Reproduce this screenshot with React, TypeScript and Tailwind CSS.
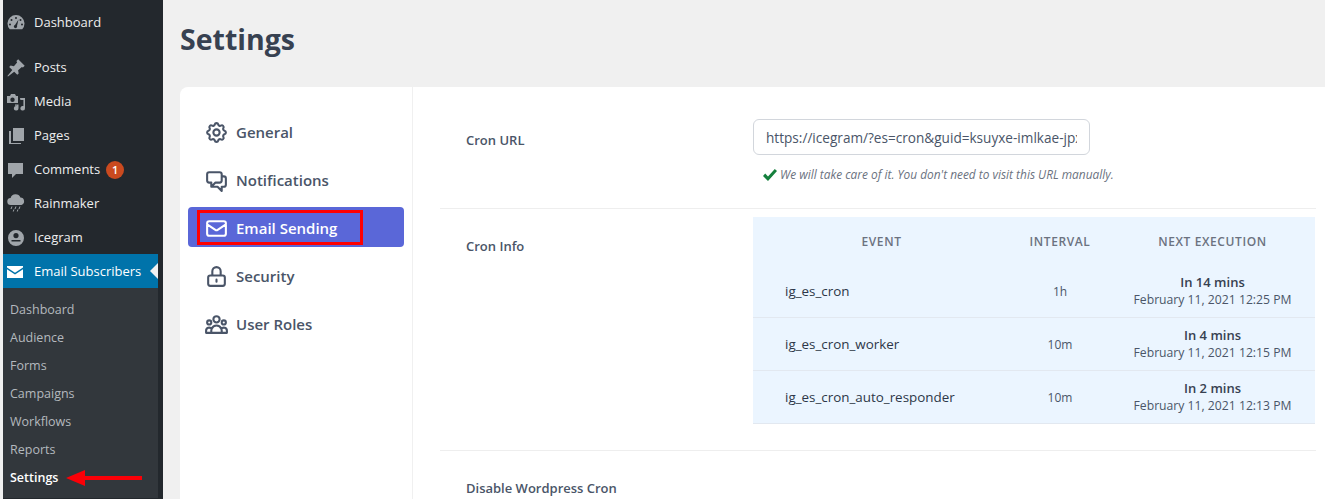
import React from "react";

const wpFont = { fontFamily: '"Open Sans", sans-serif' };

function Dash({ d }: { d: React.ReactNode }) {
  return (
    <svg width="20" height="20" viewBox="0 0 20 20" fill="#a0a5aa" className="shrink-0">
      {d}
    </svg>
  );
}

const icons: Record<string, React.ReactNode> = {
  Dashboard: (
    <path d="M3.76 16.24A8.5 8.5 0 1 1 16.24 16.24ZM10 4a1 1 0 1 0 0 2 1 1 0 0 0 0-2ZM5.5 6a1 1 0 1 0 0 2 1 1 0 0 0 0-2ZM14.5 6a1 1 0 1 0 0 2 1 1 0 0 0 0-2ZM4 10.5a1 1 0 1 0 0 2 1 1 0 0 0 0-2ZM16 10.5a1 1 0 1 0 0 2 1 1 0 0 0 0-2ZM12.5 6.5 9 12a1.6 1.6 0 1 0 2 1Z" fillRule="evenodd" />
  ),
  Posts: <path d="M10.44 3.02 12.2 1.3l6.5 6.5-1.76 1.76-1.1-.6-3.75 3.2.6 3.3-1.4 1.4-3.1-3.1L2 18.6l-.6-.6 4.9-5.9-3.1-3.1 1.4-1.4 3.3.6 3.2-3.75Z" />,
  Media: (
    <path d="M1 4h3l1-2h4l1 2h2v7H1Zm5.5 1.5a2.2 2.2 0 1 0 0 4.4 2.2 2.2 0 0 0 0-4.4ZM14 6h5v10.2a2.3 2.3 0 1 1-1.6-2.1V8h-3ZM9 12.5h3.5v3.7a2.3 2.3 0 1 1-1.6-2.1v-.4H9Z" fillRule="evenodd" />
  ),
  Pages: <path d="M7 2h11v13H7ZM5 5v12h10v1H3V5Z" />,
  Comments: <path d="M2 3h15v11h-7l-4 4v-4H2Z" />,
  Rainmaker: (
    <path d="M5 11a3.5 3.5 0 0 1-.4-7A5.2 5.2 0 0 1 14.4 3.6 3.8 3.8 0 0 1 15.5 11ZM5.5 12.5h1l-1 2.5h-1Zm4 0h1l-1 2.5h-1Zm4 0h1l-1 2.5h-1Zm-6 3h1l-.8 2h-1Zm4 0h1l-.8 2h-1Z" />
  ),
  Icegram: <path d="M10 2a8 8 0 1 0 0 16 8 8 0 0 0 0-16ZM10 5a2.6 2.6 0 1 1 0 5.2A2.6 2.6 0 0 1 10 5ZM5.5 12h9v1.6h-9Z" fillRule="evenodd" />,
};

function MenuItem({ label, badge }: { label: string; badge?: string }) {
  return (
    <div className="h-[34px] flex items-center pl-[3px] pt-[2px] text-[13px] text-[#eeeeee]">
      <span className="w-[28px] flex">
        <Dash d={icons[label]} />
      </span>
      <span>{label}</span>
      {badge && (
        <span className="ml-[6px] w-[18px] h-[18px] rounded-full bg-[#ca4a1f] text-white text-[11px] font-semibold flex items-center justify-center">
          {badge}
        </span>
      )}
    </div>
  );
}

function Side() {
  return (
    <aside className="w-[160px] h-[499px] shrink-0 ml-[3px] bg-[#23282d] overflow-hidden" style={wpFont}>
      <div className="pt-[5px]">
        <MenuItem label="Dashboard" />
      </div>
      <div className="pt-[11px]">
        <MenuItem label="Posts" />
        <MenuItem label="Media" />
        <MenuItem label="Pages" />
        <MenuItem label="Comments" badge="1" />
        <MenuItem label="Rainmaker" />
        <MenuItem label="Icegram" />
      </div>
      <div className="w-[155px]">
        <div className="relative h-[34px] bg-[#0073aa] flex items-center pl-[2px] pt-[2px] text-[13px] text-white">
          <span className="w-[29px] flex">
            <svg width="20" height="20" viewBox="0 0 20 20" fill="white">
              <path d="M2 4h16v1.4l-8 5.4-8-5.4ZM2 7.2l8 5.4 8-5.4V16H2Z" />
            </svg>
          </span>
          <span>Email Subscribers</span>
          <span className="absolute right-0 top-[9px] border-y-[8px] border-y-transparent border-r-[8px] border-r-[#f1f1f1]" />
        </div>
        <div className="bg-[#32373c] pt-[8px] pb-[6px] text-[12.5px] text-[#b4b9be]">
          {["Dashboard", "Audience", "Forms", "Campaigns", "Workflows", "Reports"].map((s) => (
            <div key={s} className="h-[28px] pl-[7px] flex items-center">
              {s}
            </div>
          ))}
          <div className="relative h-[28px] pl-[7px] flex items-center text-white font-semibold">
            Settings
            <svg className="absolute left-[60px] top-[5px]" width="82" height="18" viewBox="0 0 82 18">
              <path d="M3 9 22 1v6h57v4H22v6Z" fill="#fb0007" />
            </svg>
          </div>
        </div>
      </div>
    </aside>
  );
}

function HeroIcon({ d }: { d: string }) {
  return (
    <svg width="25" height="25" viewBox="0 0 24 24" fill="none" stroke="currentColor" strokeWidth="2" strokeLinecap="round" strokeLinejoin="round" className="shrink-0">
      <path d={d} />
    </svg>
  );
}

function NavItem({ d, label, active }: { d: string; label: string; active?: boolean }) {
  return (
    <div
      className={
        "relative h-[40px] mb-[8px] pt-[2px] rounded-[4px] flex items-center pl-[16px] gap-[7px] text-[15px] font-semibold " +
        (active ? "bg-[#5a67d8] text-white" : "text-[#4a5568]")
      }
    >
      <HeroIcon d={d} />
      <span>{label}</span>
      {active && <span className="absolute left-[9px] top-[3px] w-[166px] h-[35px] border-[3px] border-[#ff0000]" />}
    </div>
  );
}

function Row({ name, int, rel, date }: { name: string; int: string; rel: string; date: string }) {
  return (
    <div className="h-[53px] flex items-center border-b border-[#e2e8f0]">
      <div className="w-[253px] pl-[32px] text-[#2d3748] font-medium text-[13.4px]">{name}</div>
      <div className="w-[108px] pt-[1px] text-center text-[12px] text-[#4a5568]">{int}</div>
      <div className="flex-1 text-center pr-[4px]">
        <div className="text-[13px] leading-[17px] font-semibold text-[#374151]">{rel}</div>
        <div className="text-[12.2px] leading-[17px] text-[#4a5568]">{date}</div>
      </div>
    </div>
  );
}

export default function App() {
  const font = { fontFamily: '"Open Sans", sans-serif' };
  return (
    <div className="w-[1325px] h-[499px] flex bg-[#f0f0f0] overflow-hidden" style={font}>
      <Side />
      <main className="flex-1 min-w-0 pl-[17px]">
        <h1 className="h-[87px] pt-[20px] text-[28.5px] leading-[38px] font-bold text-[#374151]" style={font}>
          Settings
        </h1>
        <div className="w-[1145px] h-[412px] bg-white rounded-tl-[8px] flex">
          <nav className="w-[233px] shrink-0 pl-[8px] pr-[8px] pt-[24px] border-r border-[#f0f0f0]" style={font}>
            <NavItem label="General" d="M10.325 4.317c.426-1.756 2.924-1.756 3.35 0a1.724 1.724 0 002.573 1.066c1.543-.94 3.31.826 2.37 2.37a1.724 1.724 0 001.065 2.572c1.756.426 1.756 2.924 0 3.35a1.724 1.724 0 00-1.066 2.573c.94 1.543-.826 3.31-2.37 2.37a1.724 1.724 0 00-2.572 1.065c-.426 1.756-2.924 1.756-3.35 0a1.724 1.724 0 00-2.573-1.066c-1.543.94-3.31-.826-2.37-2.37a1.724 1.724 0 00-1.065-2.572c-1.756-.426-1.756-2.924 0-3.35a1.724 1.724 0 001.066-2.573c-.94-1.543.826-3.31 2.37-2.37.996.608 2.296.07 2.572-1.065zM15 12a3 3 0 11-6 0 3 3 0 016 0z" />
            <NavItem label="Notifications" d="M17 8h2a2 2 0 012 2v6a2 2 0 01-2 2h-2v4l-4-4H9a1.994 1.994 0 01-1.414-.586m0 0L11 14h4a2 2 0 002-2V6a2 2 0 00-2-2H5a2 2 0 00-2 2v6a2 2 0 002 2h2v4l.586-.586z" />
            <NavItem active label="Email Sending" d="M3 8l7.89 5.26a2 2 0 002.22 0L21 8M5 19h14a2 2 0 002-2V7a2 2 0 00-2-2H5a2 2 0 00-2 2v10a2 2 0 002 2z" />
            <NavItem label="Security" d="M12 15v2m-6 4h12a2 2 0 002-2v-6a2 2 0 00-2-2H6a2 2 0 00-2 2v6a2 2 0 002 2zm10-10V7a4 4 0 00-8 0v4h8z" />
            <NavItem label="User Roles" d="M17 20h5v-2a3 3 0 00-5.356-1.857M17 20H7m10 0v-2c0-.656-.126-1.283-.356-1.857M7 20H2v-2a3 3 0 015.356-1.857M7 20v-2c0-.656.126-1.283.356-1.857m0 0a5.002 5.002 0 019.288 0M15 7a3 3 0 11-6 0 3 3 0 016 0zm6 3a2 2 0 11-4 0 2 2 0 014 0zM7 10a2 2 0 11-4 0 2 2 0 014 0z" />
          </nav>
          <section className="w-[876px] ml-[27px]">
            <div className="h-[122px] border-b border-[#eeeeee] flex">
              <div className="w-[313px] pl-[26px] pt-[44px] text-[13px] leading-[18px] font-semibold text-[#4a5568]">Cron URL</div>
              <div className="pt-[32px]">
                <input
                  readOnly
                  value="https://icegram/?es=cron&guid=ksuyxe-imlkae-jpxyz-abcde"
                  className="w-[337px] h-[36px] px-[12px] rounded-[6px] border border-[#d2d6dc] bg-white text-[13.6px] text-[#4a5568] outline-none"
                  style={font}
                />
                <div className="mt-[11px] pl-[9px] flex items-center gap-[2px] text-[11.9px] italic text-[#6b7280]">
                  <svg width="16" height="14" viewBox="0 0 16 14">
                    <path d="M1 8 3.2 5.6 6 8.4 12.8 1 15 3 6 13Z" fill="#15803d" />
                  </svg>
                  We will take care of it. You don't need to visit this URL manually.
                </div>
              </div>
            </div>
            <div className="h-[242px] border-b border-[#eeeeee] flex">
              <div className="w-[313px] pl-[26px] pt-[28px] text-[13px] leading-[18px] font-semibold text-[#4a5568]">Cron Info</div>
              <div className="mt-[8px] w-[562px] h-[207px] bg-[#ebf5ff]">
                <div className="h-[48px] pt-[2px] flex items-center text-[12px] font-semibold tracking-[0.6px] text-[#6b7280]">
                  <div className="w-[253px] pl-[4px] text-center">EVENT</div>
                  <div className="w-[108px] text-center">INTERVAL</div>
                  <div className="flex-1 text-center pr-[4px]">NEXT EXECUTION</div>
                </div>
                <Row name="ig_es_cron" int="1h" rel="In 14 mins" date="February 11, 2021 12:25 PM" />
                <Row name="ig_es_cron_worker" int="10m" rel="In 4 mins" date="February 11, 2021 12:15 PM" />
                <Row name="ig_es_cron_auto_responder" int="10m" rel="In 2 mins" date="February 11, 2021 12:13 PM" />
              </div>
            </div>
            <div className="pl-[26px] pt-[28px] text-[13px] leading-[18px] font-semibold text-[#4a5568]">Disable Wordpress Cron</div>
          </section>
        </div>
      </main>
    </div>
  );
}
